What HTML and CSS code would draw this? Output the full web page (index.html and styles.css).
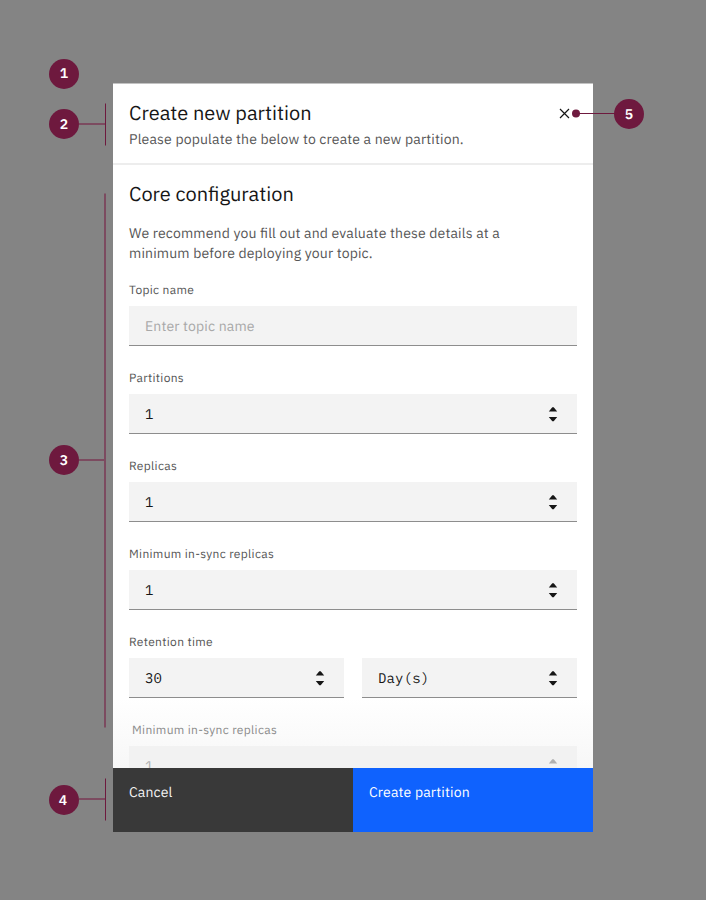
FILE: index.html
```html
<!DOCTYPE html>
<html lang="en">
<head>
<meta charset="utf-8">
<title>Create new partition</title>
<link rel="stylesheet" href="styles.css">
</head>
<body>
<svg width="0" height="0" class="defs"><symbol id="stepper" viewBox="0 0 10 16"><path d="M.8 5.600 4.300 1.300h1.400l3.500 4.300zM.8 10.900h8.400L5.700 15.200H4.300z"/></symbol></svg>
<main class="dialog">
  <header class="head">
    <div>
      <h1 class="title">Create new partition</h1>
      <p class="subtitle">Please populate the below to create a new partition.</p>
    </div>
    <svg class="close" width="11" height="11" viewBox="0 0 11 11"><path d="M1 1l9 9M10 1l-9 9"/></svg>
  </header>
  <section class="content">
    <h2 class="title">Core configuration</h2>
    <p class="intro">We recommend you fill out and evaluate these details at a<br>minimum before deploying your topic.</p>
    <div class="field"><span class="label">Topic name</span><div class="box"><span class="placeholder">Enter topic name</span></div></div>
    <div class="field"><span class="label">Partitions</span><div class="box"><span>1</span><svg class="step"><use href="#stepper"/></svg></div></div>
    <div class="field"><span class="label">Replicas</span><div class="box"><span>1</span><svg class="step"><use href="#stepper"/></svg></div></div>
    <div class="field"><span class="label">Minimum in-sync replicas</span><div class="box"><span>1</span><svg class="step"><use href="#stepper"/></svg></div></div>
    <div class="field"><span class="label">Retention time</span>
      <div class="pair">
        <div class="box"><span>30</span><svg class="step"><use href="#stepper"/></svg></div>
        <div class="box"><span>Day(s)</span><svg class="step"><use href="#stepper"/></svg></div>
      </div>
    </div>
    <div class="fade"></div>
    <div class="field faded"><span class="label">Minimum in-sync replicas</span><div class="box"><span>1</span><svg class="step"><use href="#stepper"/></svg></div></div>
  </section>
  <footer class="actions"><div class="btn cancel"><span>Cancel</span></div><div class="btn primary"><span>Create partition</span></div></footer>
</main>
<svg class="lines" width="706" height="900" viewBox="0 0 706 900">
  <g class="soft"><path d="M79 124H105M105 193.500V727.500M79 460H105M79 799H105"/></g>
  <g class="sharp"><path d="M105.500 103.500V145.500M105.500 778.500V820.500M576 113.500H615"/></g>
  <circle cx="576" cy="113.500" r="4"/>
</svg>
<div class="pin p1">1</div>
<div class="pin p2">2</div>
<div class="pin p3">3</div>
<div class="pin p4">4</div>
<div class="pin p5">5</div>
</body>
</html>
```
FILE: styles.css
```css
* { box-sizing: border-box; }
body { margin: 0; height: 900px; overflow: hidden; background: #848484; font-family: "IBM Plex Sans", Roboto, sans-serif; color: #161616; text-rendering: geometricPrecision; font-feature-settings: "liga" 1; }
h1, h2, p { margin: 0; font-weight: 400; }
.defs { position: absolute; }
.dialog { width: 480px; height: 749px; margin: 83px auto 0; background: #fff; border-top: 1px solid #c2c2c2; display: flex; flex-direction: column; }
.head { height: 81px; padding: 16px 23px 0 16px; border-bottom: 2px solid #ededed; display: flex; justify-content: space-between; }
.title { font-size: 20px; line-height: 26px; white-space: nowrap; }
.subtitle, .intro { font-size: 14px; line-height: 20px; letter-spacing: .16px; color: #565656; white-space: nowrap; }
.subtitle { margin-top: 3px; }
.close { margin-top: 8px; fill: none; stroke: #161616; stroke-width: 1.2; }
.content { position: relative; flex: 1; min-height: 0; overflow: hidden; padding: 16px 16px 0; }
.intro { margin-top: 16px; }
.field { height: 88px; padding-top: 20px; display: flex; flex-direction: column; }
.label { font-size: 12px; line-height: 16px; letter-spacing: .32px; margin-bottom: 7px; color: #565656; white-space: nowrap; }
.box { height: 40px; flex: 1 0 auto; max-height: 40px; background: #f3f3f3; border-bottom: 1px solid #8d8d8d; padding: 0 19px 0 16px; display: flex; align-items: center; justify-content: space-between; font: 14px/20px "IBM Plex Mono", "Liberation Mono", monospace; letter-spacing: .16px; }
.placeholder { font-family: "IBM Plex Sans", Roboto, sans-serif; color: #a8a8a8; }
.step { width: 10px; height: 16px; fill: #161616; }
.pair { display: grid; grid-template-columns: 1fr 1fr; gap: 18px; }
.fade { position: absolute; left: 0; right: 0; bottom: 0; height: 70px; background: linear-gradient(#fff, #f7f7f7); }
.faded { position: relative; }
.faded .label { color: #8b8b8b; padding-left: 3px; }
.faded .box { background: #f2f2f2; color: #b0b0b0; }
.faded .step { fill: #b0b0b0; }
.actions { height: 64px; display: grid; grid-template-columns: 1fr 1fr; }
.btn { padding: 14px 16px; font-size: 14px; line-height: 20px; letter-spacing: .16px; color: #fff; }
.cancel { background: #393939; color: #f4f4f4; }
.primary { background: #0f62fe; }
.lines { position: absolute; left: 0; top: 0; fill: #6e193e; }
.soft { stroke: #7c4b60; stroke-width: 2; fill: none; }
.sharp { stroke: #6e193e; stroke-width: 1; fill: none; }
.pin { position: absolute; width: 30px; height: 30px; border-radius: 50%; background: #6e193e; color: #fff; font-size: 14px; line-height: 30px; font-weight: 600; text-align: center; }
.p1 { left: 49px; top: 59px; line-height: 29px; }
.p2 { left: 49px; top: 109px; }
.p3 { left: 49px; top: 445px; }
.p4 { left: 49px; top: 785px; padding-right: 2px; }
.p5 { left: 614px; top: 98.500px; }
```
